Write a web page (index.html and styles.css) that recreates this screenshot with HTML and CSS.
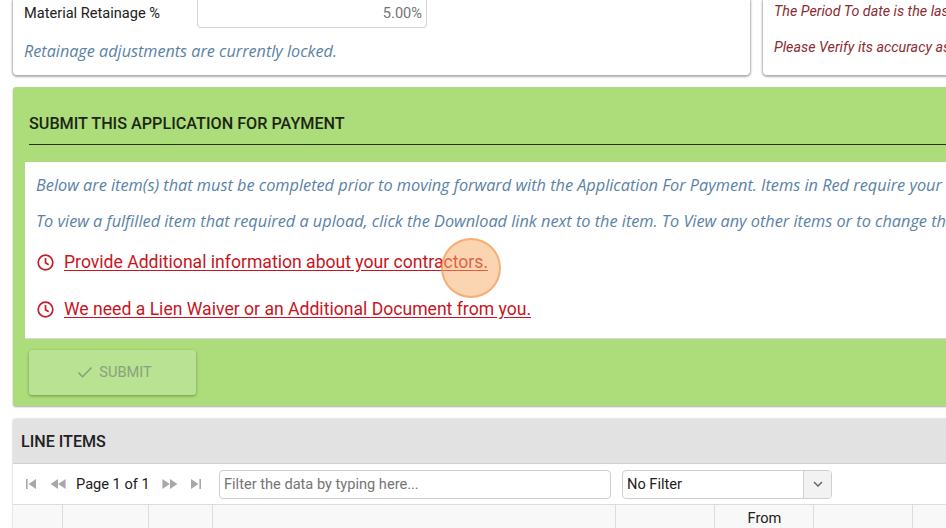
FILE: index.html
```html
<!DOCTYPE html>
<html lang="en">
<head>
<meta charset="utf-8">
<title>Application For Payment</title>
<link rel="stylesheet" href="styles.css">
</head>
<body>
<div class="page">
  <div class="top-row">
    <section class="card card-left">
      <div class="field-row">
        <label class="field-label">Material Retainage %</label>
        <div class="field-input">5.00%</div>
      </div>
      <p class="locked-note">Retainage adjustments are currently locked.</p>
    </section>
    <section class="card card-right">
      <p class="warn warn-first">The Period To date is the last day</p>
      <p class="warn">Please Verify its accuracy as it</p>
    </section>
  </div>

  <section class="submit-panel">
    <h2 class="submit-title">SUBMIT THIS APPLICATION FOR PAYMENT</h2>
    <div class="submit-box">
      <p class="hint hint-first">Below are item(s) that must be completed prior to moving forward with the Application For Payment. Items in Red require your</p>
      <p class="hint hint-second">To view a fulfilled item that required a upload, click the Download link next to the item. To View any other items or to change th</p>
      <div class="todo todo-first">
        <svg class="clock" viewBox="0 0 16 16"><circle cx="8" cy="8" r="6.9"/><path d="M8 3.8V8.3L11 10.2"/></svg>
        <a class="todo-link" href="#">Provide Additional information about your contractors.</a>
      </div>
      <div class="todo todo-second">
        <svg class="clock" viewBox="0 0 16 16"><circle cx="8" cy="8" r="6.9"/><path d="M8 3.8V8.3L11 10.2"/></svg>
        <a class="todo-link" href="#">We need a Lien Waiver or an Additional Document from you.</a>
      </div>
    </div>
    <button class="submit-btn" type="button">
      <svg class="check" viewBox="0 0 16 16"><path d="M1.5 8.6L5.6 12.7L14.5 3.6"/></svg>
      <span>SUBMIT</span>
    </button>
  </section>

  <section class="items-panel">
    <h2 class="items-title">LINE ITEMS</h2>
    <div class="toolbar">
      <div class="pager">
        <svg class="pg pg-first" viewBox="0 0 12 10"><path d="M1 0H2.6V10H1ZM11 0V10L3.6 5Z"/></svg>
        <svg class="pg pg-prev" viewBox="0 0 16 10"><path d="M8 0V10L.6 5ZM15.6 0V10L8.2 5Z"/></svg>
        <span class="page-text">Page 1 of 1</span>
        <svg class="pg pg-next" viewBox="0 0 16 10"><path d="M.4 0V10L7.8 5ZM8 0V10L15.4 5Z"/></svg>
        <svg class="pg pg-last" viewBox="0 0 12 10"><path d="M1 0V10L8.4 5ZM9.4 0H11V10H9.4Z"/></svg>
      </div>
      <div class="filter-input">Filter the data by typing here...</div>
      <div class="filter-select">
        <span class="select-value">No Filter</span>
        <span class="select-arrow"><svg class="chev" viewBox="0 0 10 6"><path d="M1 1L5 5L9 1"/></svg></span>
      </div>
    </div>
    <div class="grid-head">
      <div class="col"></div>
      <div class="col"></div>
      <div class="col"></div>
      <div class="col"></div>
      <div class="col"></div>
      <div class="col">From</div>
      <div class="col"></div>
      <div class="col"></div>
    </div>
  </section>

  <div class="cursor-dot"></div>
</div>
</body>
</html>
```

FILE: styles.css
```css
* { box-sizing: border-box; }
html, body { margin: 0; padding: 0; height: 100%; overflow: hidden; background: #fff; }
body { font-family: Roboto, "Liberation Sans", sans-serif; color: #212121; }
p, h2 { margin: 0; }

.page { position: relative; width: 946px; height: 528px; overflow: hidden; padding: 0 0 0 13px; }
.page > * { width: 1200px; }

.top-row { display: flex; gap: 13px; height: 75px; }
.card { background: #fff; border-radius: 0 0 4px 4px; box-shadow: 0 1px 2px 1px rgba(0,0,0,.32); }
.card-left { width: 737px; padding-left: 11px; }
.card-right { flex: 1; padding: 1px 0 0 11px; }

.field-row { display: flex; align-items: flex-start; height: 28px; }
.field-label { width: 173px; font-size: 14.6px; line-height: 26px; color: #212121; }
.field-input { width: 230px; height: 28px; padding: 0 4px; border: 1px solid #d4d4d4; border-top: 0; border-radius: 0 0 4px 4px; text-align: right; font-size: 14.6px; line-height: 27px; color: #757575; }
.locked-note { margin-top: 12px; font-style: italic; font-size: 16.2px; line-height: 22px; color: #5a82a6; font-family: "Open Sans", Roboto, sans-serif; }

.warn { font-style: italic; font-size: 14.3px; line-height: 20px; color: #8c2b32; white-space: nowrap; }
.warn + .warn { margin-top: 16px; }

.submit-panel { height: 319px; margin-top: 12px; padding: 24px 0 0 12px; background: #acdd7a; border-radius: 3px 0 0 3px; box-shadow: 0 1px 2px rgba(0,0,0,.35); }
.submit-title { margin: 0 0 17px 4px; height: 34px; border-bottom: 1px solid #26331c; font-size: 16.2px; line-height: 26px; font-weight: 500; color: #1c2614; }
.submit-box { height: 177px; padding-top: 12px; background: #fff; border-bottom: 1px solid #d9d9d9; padding-left: 11px; }
.hint { font-style: italic; font-size: 16.3px; line-height: 22px; color: #5a82a6; white-space: nowrap; font-family: "Open Sans", Roboto, sans-serif; }
.hint-second { margin-top: 14px; }
.todo { display: flex; align-items: center; gap: 10.5px; height: 24px; padding-left: .5px; }
.todo-first { margin-top: 18px; }
.todo-second { margin-top: 23px; }
.clock { width: 17px; height: 17px; fill: none; stroke: #c0202a; stroke-width: 1.6; }
.todo-link { font-size: 17.6px; line-height: 24px; color: #c8141e; text-decoration: underline; text-underline-offset: 2px; }

.submit-btn { display: flex; align-items: center; justify-content: center; gap: 6px; width: 167px; height: 45px; margin: 11px 0 0 4px; padding: 0 0 2px 4px; border: 0; border-radius: 3px; background: #b9e292; box-shadow: 0 1px 3px rgba(0,0,0,.35); font-family: inherit; font-size: 14.6px; color: #8ba07e; }
.check { width: 16px; height: 16px; fill: none; stroke: #85a276; stroke-width: 1.5; }

.items-panel { height: 120px; margin-top: 13px; border-radius: 3px 0 0 0; box-shadow: 0 0 2px rgba(0,0,0,.35); background: #fff; }
.items-title { height: 45px; padding-left: 8px; background: #e2e2e2; border-bottom: 1px solid #cfcfcf; font-size: 16.1px; line-height: 45px; font-weight: 500; color: #212121; }

.toolbar { display: flex; align-items: center; height: 41px; border-bottom: 1px solid #dcdcdc; }
.pager { display: flex; align-items: center; width: 206px; height: 28px; padding-left: 12px; color: #212121; }
.pg { height: 10px; fill: #a8a8a8; flex: none; }
.pg-first { width: 12px; }
.pg-prev { width: 16px; margin-left: 13px; }
.page-text { margin: 0 12px 0 10px; font-size: 14.6px; line-height: 28px; white-space: nowrap; }
.pg-next { width: 16px; }
.pg-last { width: 12px; margin-left: 12px; }
.filter-input { width: 392px; height: 29px; padding-left: 4px; border: 1px solid #cfcfcf; border-radius: 4px; font-size: 14.6px; line-height: 26px; color: #757575; }
.filter-select { display: flex; width: 210px; height: 29px; margin-left: 11px; border: 1px solid #cfcfcf; border-radius: 4px; overflow: hidden; }
.select-value { flex: 1; padding-left: 4px; font-size: 14.6px; line-height: 26px; color: #212121; }
.select-arrow { display: flex; align-items: center; justify-content: center; width: 28px; background: #f2f2f2; border-left: 1px solid #cfcfcf; }
.chev { width: 10px; height: 6px; fill: none; stroke: #666; stroke-width: 1.5; }

.grid-head { display: grid; grid-template-columns: 50px 86px 64px 403px 99px 99px 99px 1fr; height: 34px; background: #f8f8f8; }
.col { border-right: 1px solid #dcdcdc; text-align: center; font-size: 14.6px; line-height: 26px; padding-left: 1px; color: #212121; }

.page > .cursor-dot { position: absolute; left: 441px; top: 238px; width: 60px; height: 60px; border-radius: 50%; background: rgba(248,170,100,.5); border: 2px solid rgba(240,150,80,.6); }
```
